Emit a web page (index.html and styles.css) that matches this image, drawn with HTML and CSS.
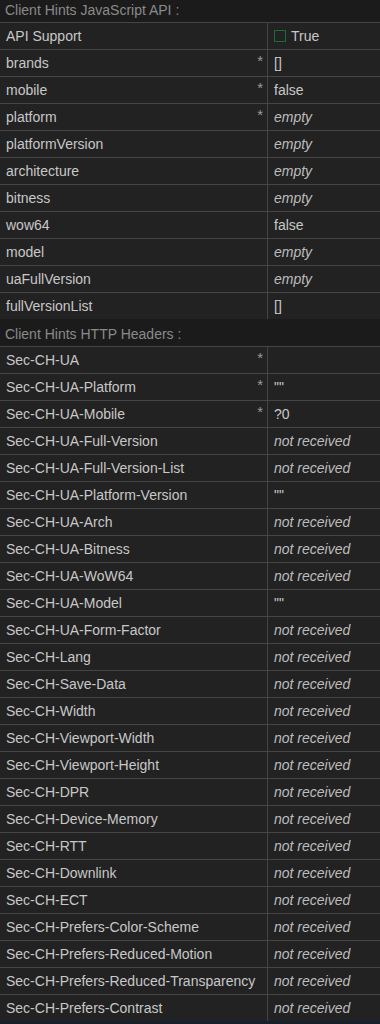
FILE: index.html
```html
<!DOCTYPE html>
<html lang="en">
<head>
    <meta charset="UTF-8">
    <meta name="viewport" content="width=device-width, initial-scale=1.0">
    <title>Client Hints</title>
    <link rel="stylesheet" href="styles.css">
</head>
<body>
    <div class="page">
        <div class="section-title">Client Hints JavaScript API :</div>
        <table class="hints">
            <tr><td>API Support</td><td><span class="check"></span>True</td></tr>
            <tr><td>brands<span class="req">*</span></td><td>[]</td></tr>
            <tr><td>mobile<span class="req">*</span></td><td>false</td></tr>
            <tr><td>platform<span class="req">*</span></td><td class="na">empty</td></tr>
            <tr><td>platformVersion</td><td class="na">empty</td></tr>
            <tr><td>architecture</td><td class="na">empty</td></tr>
            <tr><td>bitness</td><td class="na">empty</td></tr>
            <tr><td>wow64</td><td>false</td></tr>
            <tr><td>model</td><td class="na">empty</td></tr>
            <tr><td>uaFullVersion</td><td class="na">empty</td></tr>
            <tr><td>fullVersionList</td><td>[]</td></tr>
        </table>

        <div class="section-title">Client Hints HTTP Headers :</div>
        <table class="hints">
            <tr><td>Sec-CH-UA<span class="req">*</span></td><td></td></tr>
            <tr><td>Sec-CH-UA-Platform<span class="req">*</span></td><td>""</td></tr>
            <tr><td>Sec-CH-UA-Mobile<span class="req">*</span></td><td>?0</td></tr>
            <tr><td>Sec-CH-UA-Full-Version</td><td class="na">not received</td></tr>
            <tr><td>Sec-CH-UA-Full-Version-List</td><td class="na">not received</td></tr>
            <tr><td>Sec-CH-UA-Platform-Version</td><td>""</td></tr>
            <tr><td>Sec-CH-UA-Arch</td><td class="na">not received</td></tr>
            <tr><td>Sec-CH-UA-Bitness</td><td class="na">not received</td></tr>
            <tr><td>Sec-CH-UA-WoW64</td><td class="na">not received</td></tr>
            <tr><td>Sec-CH-UA-Model</td><td>""</td></tr>
            <tr><td>Sec-CH-UA-Form-Factor</td><td class="na">not received</td></tr>
            <tr><td>Sec-CH-Lang</td><td class="na">not received</td></tr>
            <tr><td>Sec-CH-Save-Data</td><td class="na">not received</td></tr>
            <tr><td>Sec-CH-Width</td><td class="na">not received</td></tr>
            <tr><td>Sec-CH-Viewport-Width</td><td class="na">not received</td></tr>
            <tr><td>Sec-CH-Viewport-Height</td><td class="na">not received</td></tr>
            <tr><td>Sec-CH-DPR</td><td class="na">not received</td></tr>
            <tr><td>Sec-CH-Device-Memory</td><td class="na">not received</td></tr>
            <tr><td>Sec-CH-RTT</td><td class="na">not received</td></tr>
            <tr><td>Sec-CH-Downlink</td><td class="na">not received</td></tr>
            <tr><td>Sec-CH-ECT</td><td class="na">not received</td></tr>
            <tr><td>Sec-CH-Prefers-Color-Scheme</td><td class="na">not received</td></tr>
            <tr><td>Sec-CH-Prefers-Reduced-Motion</td><td class="na">not received</td></tr>
            <tr><td>Sec-CH-Prefers-Reduced-Transparency</td><td class="na">not received</td></tr>
            <tr><td>Sec-CH-Prefers-Contrast</td><td class="na">not received</td></tr>
        </table>
    </div>
</body>
</html>
```

FILE: styles.css
```css
body {
    margin: 0;
    background-color: #18212b;
    font-family: "Liberation Sans", Arial, sans-serif;
    font-size: 14px;
    color: #c8c8c8;
}
.page {
    margin-top: -5px;
}
.section-title {
    height: 27px;
    line-height: 31px;
    padding-left: 5px;
    background-color: #1b1b1b;
    color: #8a8a8a;
}
.hints {
    width: 100%;
    border-collapse: collapse;
    background-color: #222222;
}
.hints td {
    height: 26px;
    padding: 0 6px;
    border-top: 1px solid #454545;
    vertical-align: middle;
    white-space: nowrap;
}
.hints td:first-child {
    width: 255px;
    border-right: 1px solid #454545;
}
.req {
    float: right;
    color: #9a9a9a;
    font-size: 15px;
    margin-right: -2px;
    margin-top: -3px;
}
.na {
    font-style: italic;
    color: #bdbdbd;
}
.check {
    display: inline-block;
    width: 10px;
    height: 10px;
    border: 1px solid #1d6b3c;
    margin-right: 5px;
    vertical-align: -1px;
}
```
